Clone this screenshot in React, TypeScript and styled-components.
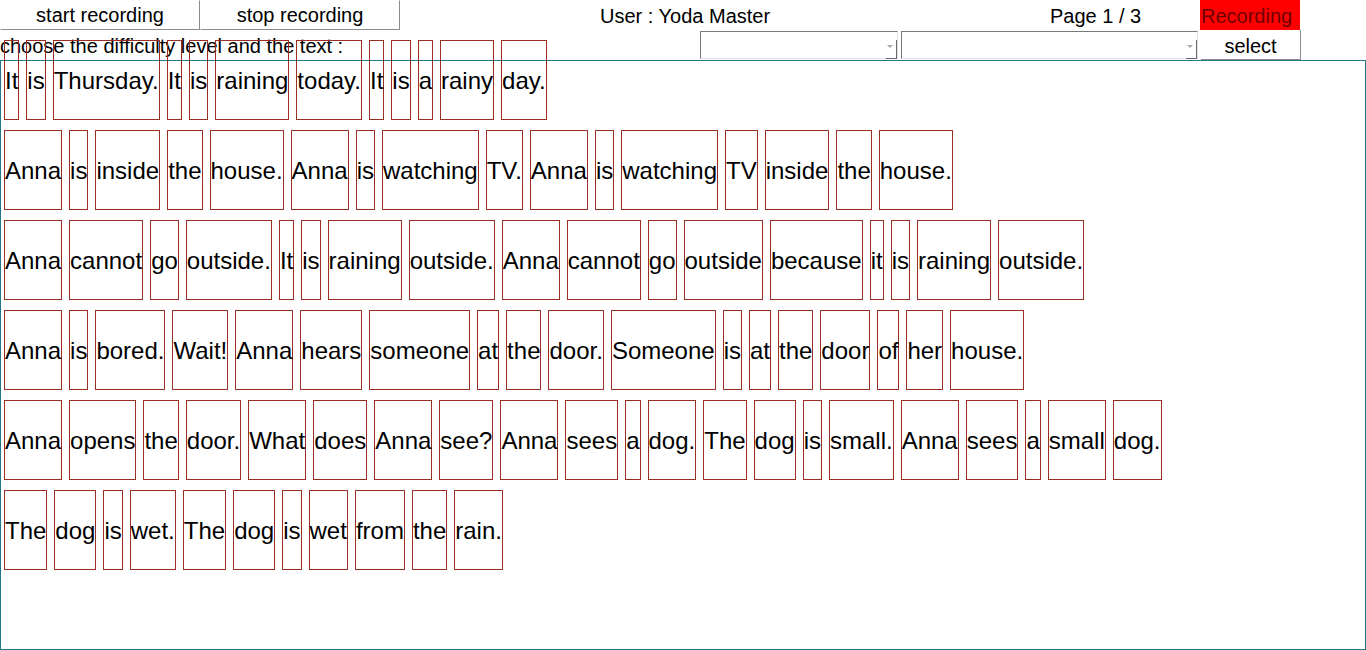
import styled, { createGlobalStyle } from "styled-components";

const lines = [
  "It is Thursday. It is raining today. It is a rainy day.",
  "Anna is inside the house. Anna is watching TV. Anna is watching TV inside the house.",
  "Anna cannot go outside. It is raining outside. Anna cannot go outside because it is raining outside.",
  "Anna is bored. Wait! Anna hears someone at the door. Someone is at the door of her house.",
  "Anna opens the door. What does Anna see? Anna sees a dog. The dog is small. Anna sees a small dog.",
  "The dog is wet. The dog is wet from the rain.",
];

function App() {
  return (
    <>
      <GlobalStyle />
      <Page>
        <TopBar>
          <ToolButton>start recording</ToolButton>
          <ToolButton>stop recording</ToolButton>
          <UserLabel>User : Yoda Master</UserLabel>
          <PageLabel>Page 1 / 3</PageLabel>
          <RecordingBadge>Recording</RecordingBadge>
        </TopBar>
        <ChooseBar>
          <ChooseLabel>choose the difficulty level and the text :</ChooseLabel>
          <Combo $width={198}>
            <ComboArrow />
          </Combo>
          <Combo $width={297}>
            <ComboArrow />
          </Combo>
          <SelectButton>select</SelectButton>
        </ChooseBar>
        <ReadingPanel>
          <Lines>
            {lines.map((line, i) => (
              <Line key={i}>
                {line.split(" ").map((word, j) => (
                  <Word key={j}>{word}</Word>
                ))}
              </Line>
            ))}
          </Lines>
        </ReadingPanel>
      </Page>
    </>
  );
}

export default App;

const GlobalStyle = createGlobalStyle`
  html, body {
    margin: 0;
    padding: 0;
    background: #ffffff;
  }
  body {
    font-family: "Liberation Sans", Arial, sans-serif;
    color: #000000;
  }
`;

const Page = styled.div`
  width: 1366px;
  height: 650px;
  overflow: hidden;
`;

const TopBar = styled.div`
  display: flex;
  height: 30px;
  font-size: 20px;
`;

const ToolButton = styled.button`
  width: 200px;
  height: 30px;
  padding: 0;
  background: #ffffff;
  border: 1px solid;
  border-color: #ffffff #8c8c8c #8c8c8c #ffffff;
  font-family: "Liberation Sans", Arial, sans-serif;
  font-size: 20px;
  color: #000000;
  line-height: 28px;
`;

const UserLabel = styled.div`
  width: 400px;
  padding-left: 200px;
  line-height: 32px;
`;

const PageLabel = styled.div`
  width: 150px;
  padding-left: 50px;
  line-height: 32px;
`;

const RecordingBadge = styled.div`
  width: 100px;
  height: 30px;
  background: #ff0000;
  color: #6e0000;
  line-height: 32px;
  padding-left: 1px;
  box-sizing: border-box;
`;

const ChooseBar = styled.div`
  display: flex;
  height: 30px;
  font-size: 20px;
`;

const ChooseLabel = styled.div`
  width: 700px;
  line-height: 32px;
  white-space: nowrap;
`;

const Combo = styled.div<{ $width: number }>`
  position: relative;
  width: ${(p) => p.$width}px;
  height: 28px;
  margin-top: 1px;
  margin-right: 3px;
  box-sizing: border-box;
  border: 1px solid;
  border-color: #7a7a7a #e2e2e2 #e2e2e2 #7a7a7a;
  background: #ffffff;
`;

const ComboArrow = styled.span`
  position: absolute;
  right: 0;
  top: 8px;
  width: 11px;
  height: 19px;
  border-right: 1px solid #6a6a6a;
  border-bottom: 1px solid #6a6a6a;
  box-sizing: border-box;

  &::before {
    content: "";
    position: absolute;
    left: 1px;
    top: 5px;
    border-left: 3px solid transparent;
    border-right: 3px solid transparent;
    border-top: 3px solid #a8a8a8;
  }
`;

const SelectButton = styled.div`
  width: 100px;
  height: 30px;
  box-sizing: border-box;
  border-right: 1px solid #8c8c8c;
  border-bottom: 1px solid #8c8c8c;
  text-align: center;
  line-height: 32px;
`;

const ReadingPanel = styled.div`
  height: 590px;
  box-sizing: border-box;
  border: 1px solid #24788c;
  padding-left: 4px;
`;

const Lines = styled.div`
  display: flex;
  flex-direction: column;
  gap: 10px;
  margin-top: -21px;
`;

const Line = styled.div`
  display: flex;
  gap: 9px;
`;

const Word = styled.div`
  display: flex;
  align-items: center;
  height: 80px;
  padding-top: 2px;
  box-sizing: border-box;
  border: 1px solid #9a2e22;
  margin: 0 -1px;
  font-size: 24px;
  white-space: nowrap;
`;
